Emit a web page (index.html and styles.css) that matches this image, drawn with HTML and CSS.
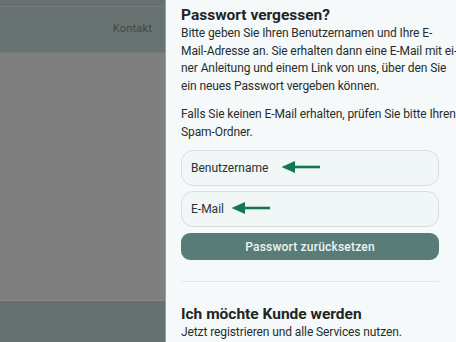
FILE: index.html
```html
<!DOCTYPE html>
<html lang="de">
<head>
<meta charset="utf-8">
<link rel="stylesheet" href="styles.css">
</head>
<body>
<div class="backdrop">
  <div class="topstrip"></div>
  <div class="header"><span class="nav">Kontakt</span></div>
  <div class="main"></div>
  <div class="footer"></div>
</div>
<aside class="panel">
  <h2 class="title">Passwort vergessen?</h2>
  <p class="text lines">Bitte geben Sie Ihren Benutzernamen und Ihre E-<br>Mail-Adresse an. Sie erhalten dann eine E-Mail mit ei-<br>ner Anleitung und einem Link von uns, über den Sie<br>ein neues Passwort vergeben können.</p>
  <p class="text lines gap">Falls Sie keinen E-Mail erhalten, prüfen Sie bitte Ihren<br>Spam-Ordner.</p>
  <div class="field">
    <span class="label">Benutzername</span>
    <svg class="arrow arrow-user" width="40" height="12" viewBox="0 0 40 12"><path d="M12 6H39" stroke="#11784f" stroke-width="2.6"/><path d="M0.5 6L14 0V12Z" fill="#11784f"/></svg>
  </div>
  <div class="field">
    <span class="label">E-Mail</span>
    <svg class="arrow arrow-mail" width="40" height="12" viewBox="0 0 40 12"><path d="M12 6H39" stroke="#11784f" stroke-width="2.6"/><path d="M0.5 6L14 0V12Z" fill="#11784f"/></svg>
  </div>
  <button class="btn">Passwort zurücksetzen</button>
  <hr class="divider">
  <h2 class="title second">Ich möchte Kunde werden</h2>
  <p class="text">Jetzt registrieren und alle Services nutzen.</p>
</aside>
</body>
</html>
```
FILE: styles.css
```css
html, body { margin: 0; padding: 0; }
body {
  width: 456px;
  height: 342px;
  overflow: hidden;
  display: flex;
  font-family: "Roboto", "Liberation Sans", sans-serif;
  background: #808080;
}
.backdrop {
  width: 165px;
  flex: none;
  display: flex;
  flex-direction: column;
  border-right: 1px solid #9a9d9c;
}
.topstrip { height: 6px; background: #677170; border-bottom: 1px solid #737c7b; }
.header {
  height: 46px;
  background: #687371;
  border-bottom: 1px solid #727a79;
  display: flex;
  align-items: center;
  justify-content: flex-end;
  padding-right: 13px;
  padding-bottom: 3px;
  box-sizing: border-box;
}
.nav { font-size: 11px; color: #3e4746; letter-spacing: 0.2px; }
.main { flex: 1; background: #7f7f7f; border-bottom: 1px solid #898686; }
.footer { height: 41px; background: #66706e; }
.panel {
  flex: 1;
  min-width: 0;
  background: #f6f9f9;
  padding: 0 17px 0 15px;
  color: #262d2d;
}
.title {
  margin: 5px 0 0;
  font-size: 15.5px;
  font-weight: 700;
  line-height: 20px;
  color: #1e2525;
}
.text {
  margin: 0;
  font-size: 12px;
  line-height: 17.5px;
  letter-spacing: -0.1px;
}
.lines { white-space: nowrap; }
.gap { margin-top: 11px; }
.field {
  position: relative;
  margin-top: 9px;
  height: 34px;
  border: 1px solid #d8dede;
  border-radius: 12px;
  background: #f1f6f6;
  display: flex;
  align-items: center;
  padding-left: 9px;
}
.field + .field { margin-top: 5px; }
.label { font-size: 12px; color: #2a3131; }
.arrow { position: absolute; top: 10px; }
.arrow-user { left: 99px; }
.arrow-mail { left: 49px; }
.btn {
  display: block;
  width: 100%;
  margin-top: 6px;
  height: 27px;
  border: none;
  border-radius: 9px;
  background: #587d79;
  color: #eef4f3;
  font-family: inherit;
  font-size: 12px;
  font-weight: 500;
  letter-spacing: 0.2px;
}
.divider {
  margin: 21px 0 0;
  border: none;
  border-top: 1px solid #e1e6e6;
}
.second { margin-top: 22px; }
```
